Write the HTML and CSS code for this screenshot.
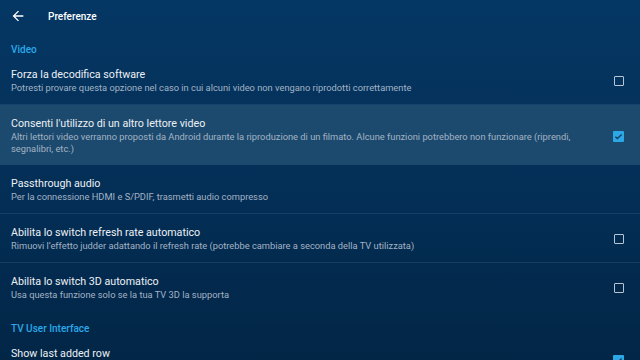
FILE: index.html
```html
<!DOCTYPE html>
<html lang="it">
<head>
    <meta charset="UTF-8" />
    <meta name="viewport" content="width=device-width, initial-scale=1" />
    <title>Preferenze</title>
    <link rel="stylesheet" href="styles.css">
</head>
<body>

    <div class="topbar">
        <svg class="back" viewBox="0 0 24 24" aria-label="Indietro">
            <path d="M20 11H7.83l5.59-5.59L12 4l-8 8 8 8 1.41-1.41L7.83 13H20v-2z" fill="#fff"/>
        </svg>
        <span class="page-title">Preferenze</span>
    </div>

    <div class="section-label">Video</div>

    <div class="pref">
        <div class="pref-text">
            <div class="pref-title">Forza la decodifica software</div>
            <div class="pref-sub">Potresti provare questa opzione nel caso in cui alcuni video non vengano riprodotti correttamente</div>
        </div>
        <span class="box"></span>
    </div>

    <div class="pref focused">
        <div class="pref-text">
            <div class="pref-title">Consenti l'utilizzo di un altro lettore video</div>
            <div class="pref-sub">Altri lettori video verranno proposti da Android durante la riproduzione di un filmato. Alcune funzioni potrebbero non funzionare (riprendi, segnalibri, etc.)</div>
        </div>
        <span class="box checked">
            <svg viewBox="0 0 12 12"><path d="M2.6 6.2l2.2 2.1 4.6-4.6" fill="none" stroke="#123d60" stroke-width="1.5"/></svg>
        </span>
    </div>

    <div class="pref">
        <div class="pref-text">
            <div class="pref-title">Passthrough audio</div>
            <div class="pref-sub">Per la connessione HDMI e S/PDIF, trasmetti audio compresso</div>
        </div>
    </div>

    <div class="pref">
        <div class="pref-text">
            <div class="pref-title">Abilita lo switch refresh rate automatico</div>
            <div class="pref-sub">Rimuovi l’effetto judder adattando il refresh rate (potrebbe cambiare a seconda della TV utilizzata)</div>
        </div>
        <span class="box"></span>
    </div>

    <div class="pref last">
        <div class="pref-text">
            <div class="pref-title">Abilita lo switch 3D automatico</div>
            <div class="pref-sub">Usa questa funzione solo se la tua TV 3D la supporta</div>
        </div>
        <span class="box"></span>
    </div>

    <div class="section-label">TV User Interface</div>

    <div class="pref">
        <div class="pref-text">
            <div class="pref-title">Show last added row</div>
            <div class="pref-sub">&nbsp;</div>
        </div>
        <span class="box checked">
            <svg viewBox="0 0 12 12"><path d="M2.6 6.2l2.2 2.1 4.6-4.6" fill="none" stroke="#123d60" stroke-width="1.5"/></svg>
        </span>
    </div>

</body>
</html>
```

FILE: styles.css
```css
html, body {
    height: 100%;
}
body {
    margin: 0;
    font-family: Roboto, "Noto Sans", Arial, sans-serif;
    color: #e9eef3;
    background: linear-gradient(180deg, #053764 0%, #032d54 60%, #022646 100%);
    overflow: hidden;
}
.topbar {
    height: 32px;
    display: flex;
    align-items: center;
    padding-left: 10px;
}
.back {
    width: 16px;
    height: 16px;
}
.page-title {
    margin-left: 22px;
    font-size: 10px;
    font-weight: 500;
    color: #fff;
}
.section-label {
    padding: 12px 11px 0;
    line-height: 12px;
    font-size: 10px;
    font-weight: 500;
    color: #2aa9ea;
}
.pref {
    display: flex;
    align-items: center;
    padding: 12px 16px 10px 11px;
    border-bottom: 1px solid rgba(120, 160, 200, 0.16);
}
.pref.focused {
    background: #1c4a6e;
    border-bottom: none;
}
.pref.last {
    border-bottom: none;
}
.pref-text {
    flex: 1;
    padding-right: 40px;
}
.pref-title {
    font-size: 10.7px;
    line-height: 14px;
    color: #edf1f5;
}
.pref-sub {
    font-size: 9.3px;
    line-height: 12px;
    color: #a3b3c4;
}
.box {
    width: 8px;
    height: 8px;
    border: 1.5px solid #b8c6d4;
    border-radius: 1px;
    flex-shrink: 0;
}
.box.checked {
    width: 11px;
    height: 11px;
    border: none;
    background: #2ca8e6;
    display: flex;
}
.box svg {
    width: 11px;
    height: 11px;
}
```
